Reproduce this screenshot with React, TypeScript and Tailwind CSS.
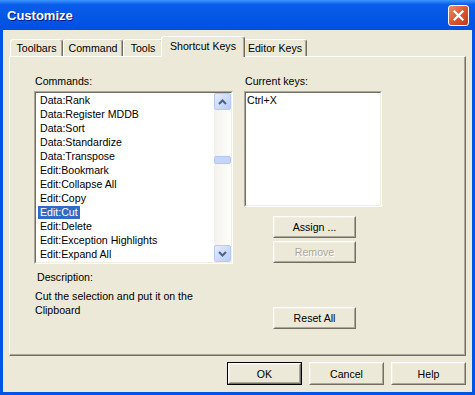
import React from "react";

const commands = [
  "Data:Rank",
  "Data:Register MDDB",
  "Data:Sort",
  "Data:Standardize",
  "Data:Transpose",
  "Edit:Bookmark",
  "Edit:Collapse All",
  "Edit:Copy",
  "Edit:Cut",
  "Edit:Delete",
  "Edit:Exception Highlights",
  "Edit:Expand All",
];

const tabs = [
  { label: "Toolbars", w: "w-[53px]" },
  { label: "Command", w: "w-[60px]" },
  { label: "Tools", w: "w-[40px]" },
  { label: "Shortcut Keys", w: "w-[84px]", active: true },
  { label: "Editor Keys", w: "w-[64px]" },
];

function Button({
  children,
  isDefault,
  disabled,
  className = "",
}: {
  children: React.ReactNode;
  isDefault?: boolean;
  disabled?: boolean;
  className?: string;
}) {
  return (
    <div className={`${isDefault ? "border border-black" : ""} ${className}`}>
      <div className="h-full border border-t-white border-l-white border-r-[#716F64] border-b-[#716F64]">
        <div
          className={`flex h-full items-center justify-center border border-t-[#F1EFE2] border-l-[#F1EFE2] border-r-[#ACA899] border-b-[#ACA899] bg-[#ECE9D8] ${
            disabled ? "text-[#ACA899] [text-shadow:1px_1px_#ffffff]" : "text-black"
          }`}
        >
          {children}
        </div>
      </div>
    </div>
  );
}

function Sunken({ className = "", children }: { className?: string; children: React.ReactNode }) {
  return (
    <div className={`border border-t-[#ACA899] border-l-[#ACA899] border-r-white border-b-white ${className}`}>
      <div className="h-full border border-t-[#716F64] border-l-[#716F64] border-r-[#F1EFE2] border-b-[#F1EFE2] bg-white">
        {children}
      </div>
    </div>
  );
}

function ScrollButton({ up }: { up?: boolean }) {
  return (
    <div className="flex h-[17px] w-[17px] items-center justify-center rounded-[2px] border border-[#B7CAF5] bg-gradient-to-br from-[#E4ECFE] to-[#B9CCF8]">
      <svg width="9" height="6" viewBox="0 0 9 6">
        <path
          d={up ? "M1 5 L4.5 1.5 L8 5" : "M1 1 L4.5 4.5 L8 1"}
          fill="none"
          stroke="#4D6185"
          strokeWidth="2"
        />
      </svg>
    </div>
  );
}

export default function App() {
  return (
    <div className="flex h-[395px] w-[475px] flex-col bg-[#0055E5] px-[3px] pb-[3px] font-['Liberation_Sans',Arial,sans-serif] text-[10.6px] leading-[14px] text-black">
      {/* title bar */}
      <div className="-mx-[3px] flex h-[30px] items-center justify-between bg-gradient-to-b from-[#3D95FF] via-[#0A5DEB] via-15% to-[#0050E0] pl-[7px] pr-[6px]">
        <span className="text-[13px] font-bold leading-none text-white [text-shadow:1px_1px_#0A1883]">
          Customize
        </span>
        <div className="flex h-[21px] w-[21px] items-center justify-center rounded-[3px] border border-white bg-gradient-to-br from-[#EE8C6C] via-[#DC5630] to-[#BF3A1C]">
          <svg width="11" height="11" viewBox="0 0 11 11">
            <path d="M1.5 1.5 L9.5 9.5 M9.5 1.5 L1.5 9.5" stroke="white" strokeWidth="2.2" strokeLinecap="square" />
          </svg>
        </div>
      </div>

      {/* client */}
      <div className="flex flex-1 flex-col bg-[#ECE9D8] px-[6px] pb-[7px]">
        {/* tabs */}
        <div className="flex h-[26px] items-end pl-[1px] pt-[6px]">
          {tabs.map((t) =>
            t.active ? (
              <div
                key={t.label}
                className={`relative z-10 -mx-[2px] -mb-[1px] flex h-[21px] ${t.w} justify-center rounded-t-[3px] border-l border-t border-r border-l-white border-t-white border-r-[#716F64] bg-[#ECE9D8] pt-[2px] shadow-[inset_-1px_0_#ACA899]`}
              >
                {t.label}
              </div>
            ) : (
              <div
                key={t.label}
                className={`flex h-[17px] ${t.w} items-center justify-center rounded-t-[3px] border-l border-t border-r border-l-white border-t-white border-r-[#716F64] bg-[#ECE9D8] shadow-[inset_-1px_0_#ACA899]`}
              >
                {t.label}
              </div>
            )
          )}
        </div>

        {/* panel */}
        <div className="flex h-[300px] border border-t-white border-l-white border-r-[#716F64] border-b-[#716F64] pl-[24px] pt-[17px] shadow-[inset_-1px_-1px_#ACA899]">
          {/* left column */}
          <div className="flex w-[199px] flex-col">
            <div className="pl-[1px]">Commands:</div>
            <Sunken className="mt-[3px] h-[173px]">
              <div className="flex h-full">
                <div className="flex-1 pl-[2px]">
                  {commands.map((c) => (
                    <div key={c} className="flex h-[14px] items-center whitespace-nowrap">
                      {c === "Edit:Cut" ? (
                        <span className="bg-[#316AC5] px-[2px] leading-[13px] text-white">{c}</span>
                      ) : (
                        <span className="px-[2px]">{c}</span>
                      )}
                    </div>
                  ))}
                </div>
                <div className="flex w-[17px] flex-col bg-gradient-to-r from-[#F3F1EC] to-[#FEFEFB]">
                  <ScrollButton up />
                  <div className="flex-1">
                    <div className="mt-[46px] h-[8px] rounded-[2px] border border-[#B4C7F4] bg-[#C6D5FB]" />
                  </div>
                  <ScrollButton />
                </div>
              </div>
            </Sunken>
            <div className="mt-[6px] pl-[3px]">Description:</div>
            <div className="mt-[5px] w-[185px] pl-[1px]">
              Cut the selection and put it on the Clipboard
            </div>
          </div>

          {/* right column */}
          <div className="ml-[11px] flex w-[138px] flex-col">
            <div className="pl-[1px]">Current keys:</div>
            <Sunken className="mt-[3px] h-[116px]">
              <div className="pl-[1px]">Ctrl+X</div>
            </Sunken>
            <Button className="ml-[29px] mt-[9px] h-[22px] w-[83px]">Assign ...</Button>
            <Button disabled className="ml-[29px] mt-[3px] h-[22px] w-[83px]">
              Remove
            </Button>
            <Button className="ml-[29px] mt-[44px] h-[22px] w-[83px]">Reset All</Button>
          </div>
        </div>

        {/* dialog buttons */}
        <div className="mt-[6px] flex justify-end gap-[7px]">
          <Button isDefault className="h-[23px] w-[75px]">OK</Button>
          <Button className="h-[23px] w-[75px]">Cancel</Button>
          <Button className="h-[23px] w-[75px]">Help</Button>
        </div>
      </div>
    </div>
  );
}
